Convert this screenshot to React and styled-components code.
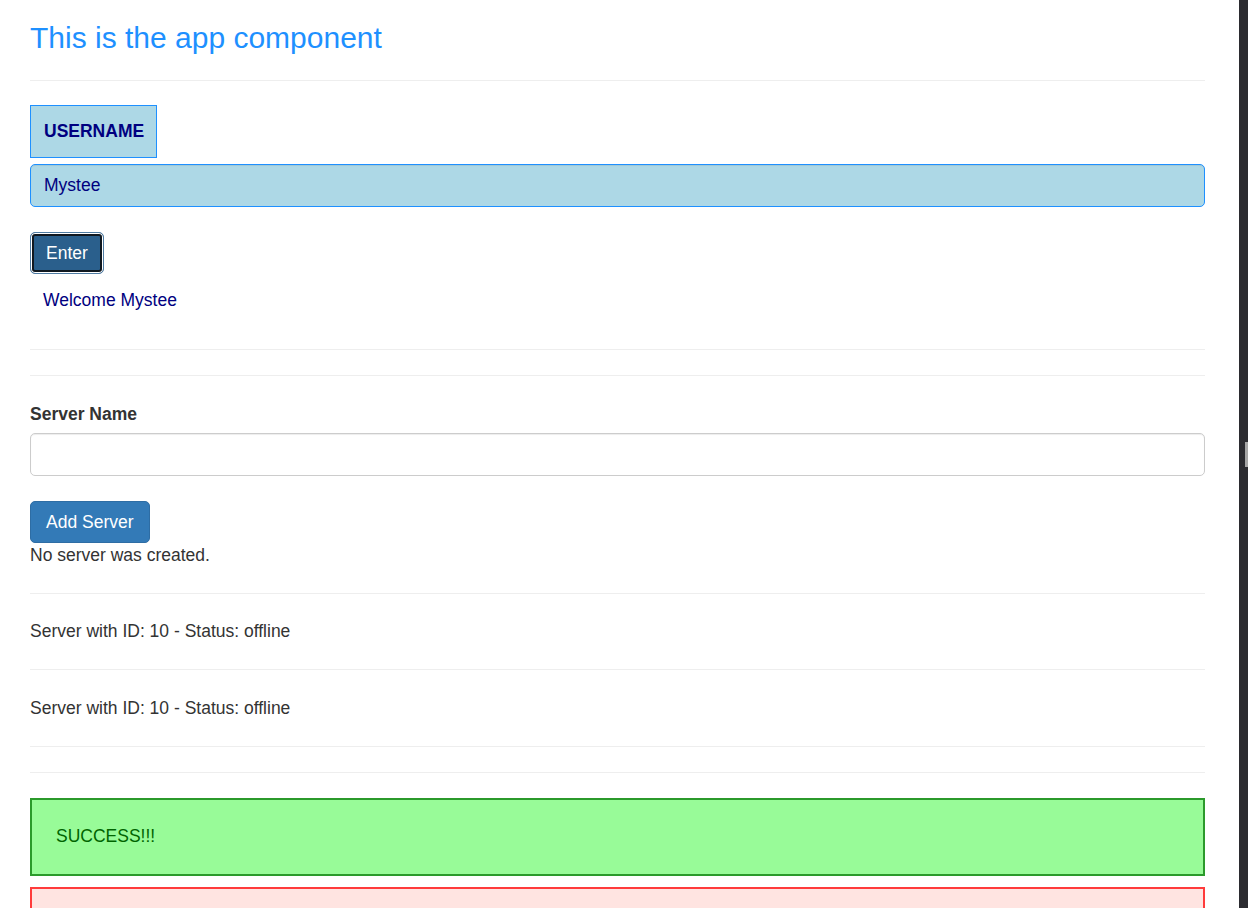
import React from "react";
import styled, { createGlobalStyle } from "styled-components";

const Global = createGlobalStyle`
  html, body { margin: 0; padding: 0; overflow: hidden; background: #fff; }
  body {
    font-family: "Liberation Sans", Arial, sans-serif;
    font-size: 17.5px;
    line-height: 25px;
    color: #333;
  }
  * { box-sizing: border-box; }
`;

const Frame = styled.div`
  display: flex;
  height: 908px;
  width: 1248px;
`;

const Main = styled.main`
  flex: 1;
  padding: 0 34px 0 30px;
  overflow: hidden;
`;

const Scrollbar = styled.div`
  width: 9px;
  background: #2b2b30;
  display: flex;
  flex-direction: column;
  align-items: flex-end;
`;

const Thumb = styled.div`
  margin-top: 442px;
  width: 3px;
  height: 25px;
  background: #a6a6a6;
`;

const Title = styled.h3`
  margin: 21px 0 0;
  font-size: 30px;
  line-height: 33px;
  font-weight: 400;
  color: #1e90ff;
`;

const Rule = styled.hr`
  margin: ${(p) => p.$top ?? 25}px 0 ${(p) => p.$bottom ?? 25}px;
  border: 0;
  border-top: 1px solid #eeeeee;
  height: 0;
`;

const NameLabel = styled.label`
  display: inline-block;
  padding: 13px 12px 13px 13px;
  border: 1px solid #1e90ff;
  background: #add8e6;
  color: #000080;
  font-weight: 700;
  margin-bottom: 6px;
`;

const Field = styled.input`
  display: block;
  width: 100%;
  height: 43px;
  padding: 8px 13px;
  font: inherit;
  border-radius: 5px;
  border: 1px solid ${(p) => (p.$tinted ? "#1e90ff" : "#cccccc")};
  background: ${(p) => (p.$tinted ? "#add8e6" : "#fff")};
  color: ${(p) => (p.$tinted ? "#000080" : "#555")};
  box-shadow: inset 0 1px 1px rgba(0, 0, 0, 0.075);
  outline: none;
`;

const Button = styled.button`
  display: inline-block;
  height: 42px;
  font: inherit;
  color: #fff;
  border-radius: 5px;
  cursor: pointer;
  margin-top: ${(p) => p.$top}px;
  padding: 0 15px;
  background: ${(p) => (p.$focused ? "#2a5f8c" : "#337ab7")};
  border: 1px solid ${(p) => (p.$focused ? "#4f7ca3" : "#2e6da4")};
  box-shadow: ${(p) =>
    p.$focused ? "inset 0 0 0 1px #ffffff, inset 0 0 0 3px #101820" : "none"};
`;

const Welcome = styled.div`
  padding: 14px 13px 11px;
  color: #000080;
`;

const FieldLabel = styled.label`
  display: block;
  font-weight: 700;
  margin-bottom: 6px;
`;

const Text = styled.p`
  margin: 0;
`;

const ServerLine = styled.p`
  margin: 0;
`;

const Alert = styled.div`
  padding: 24px 24px;
  margin-bottom: 11px;
  border: 2px solid ${(p) => p.$border};
  background: ${(p) => p.$bg};
  color: ${(p) => p.$color};
  min-height: 78px;
`;

export default function App() {
  return (
    <>
      <Global />
      <Frame>
        <Main>
          <Title>This is the app component</Title>
          <Rule $top={26} $bottom={24} />
          <NameLabel>USERNAME</NameLabel>
          <Field $tinted value="Mystee" readOnly />
          <Button $focused $top={25}>Enter</Button>
          <Welcome>Welcome Mystee</Welcome>
          <Rule />
          <Rule $top={0} $bottom={26} />
          <FieldLabel>Server Name</FieldLabel>
          <Field readOnly />
          <Button $top={25}>Add Server</Button>
          <Text>No server was created.</Text>
          <Rule />
          <ServerLine>Server with ID: 10 - Status: offline</ServerLine>
          <Rule $bottom={26} />
          <ServerLine>Server with ID: 10 - Status: offline</ServerLine>
          <Rule />
          <Rule $top={0} />
          <Alert $border="#2b9a2b" $bg="#98fb98" $color="#006400">
            SUCCESS!!!
          </Alert>
          <Alert $border="#ff3b3b" $bg="#ffe4e1" $color="#8b0000" />
        </Main>
        <Scrollbar>
          <Thumb />
        </Scrollbar>
      </Frame>
    </>
  );
}
